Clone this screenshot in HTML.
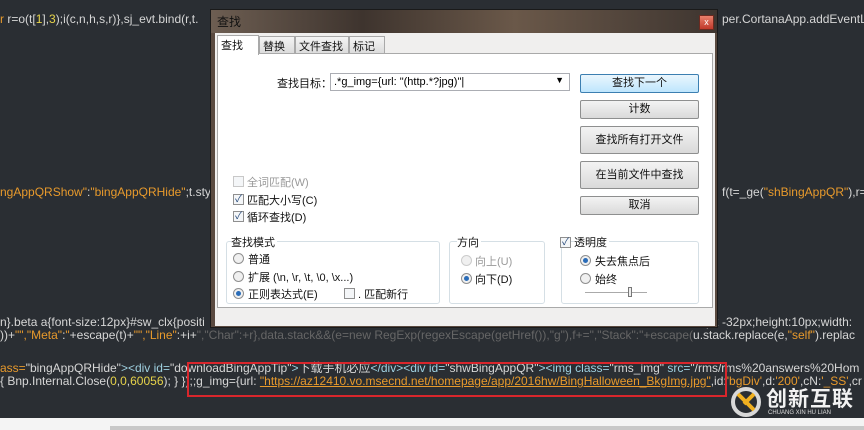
<!DOCTYPE html>
<html><head><meta charset="utf-8"><style>
*{margin:0;padding:0;box-sizing:border-box}
body{width:864px;height:430px;overflow:hidden;background:#2a2e33;font-family:"Liberation Sans","Noto Sans CJK SC",sans-serif;position:relative}
.c{position:absolute;font-size:12px;color:#d6d6d6;white-space:nowrap;line-height:13px;font-family:"Liberation Sans","Noto Sans CJK SC",sans-serif}
.o{color:#e89a2c}.y{color:#e6d34a}.b{color:#9fd0e0}.u{color:#e89a2c;text-decoration:underline}
.a{position:absolute}
.dlg{left:210px;top:9px;width:508px;height:319px;background:#5a4a40;border:1px solid #1a1a1a}
.ttl{left:0;top:0;width:506px;height:23px;background:linear-gradient(90deg,#6d5e52,#3e342e 30%,#6a5849 60%,#3e3530);color:#111;font-size:12px;padding:3px 6px}
.close{left:488px;top:5px;width:15px;height:15px;background:linear-gradient(#e8806c,#c0392b);border:1px solid #6b2a20;color:#fff;font-size:9px;text-align:center;line-height:13px}
.body{left:4px;top:23px;width:500px;height:293px;background:#f0efee}
.page{left:2px;top:20px;width:496px;height:255px;background:#fff;border:1px solid #a9a9a9}
.tab{top:3px;height:18px;background:linear-gradient(#f4f4f4,#dcdcdc);border:1px solid #a9a9a9;font-size:11px;padding:1px 3px;color:#111;white-space:nowrap;overflow:hidden}
.btn{left:365px;width:119px;background:linear-gradient(#f3f3f3,#dadada);border:1px solid #8e8f8f;border-radius:2px;font-size:11px;text-align:center;color:#111;line-height:17px}
.t{font-size:11px;color:#111;white-space:nowrap}
.cb{width:11px;height:11px;border:1px solid #8f8f8f;background:#f4f6f8;font-size:10px;line-height:9px;color:#24487a;text-align:center}
.rd{width:11px;height:11px;border:1px solid #8f8f8f;border-radius:50%;background:#f0f0f0}
.rd.on::after{content:"";position:absolute;left:2px;top:2px;width:5px;height:5px;border-radius:50%;background:#2a6cb8}
.grp{border:1px solid #d5dfe5;border-radius:3px}
</style></head><body>
<div class="c" style="left:0;top:13px"><span class="o">r</span> r=o(t[<span class="y">1</span>],<span class="y">3</span>);i(c,n,h,s,r)},sj_evt.bind(r,t.</div>
<div class="c" style="left:722px;top:13px">per.CortanaApp.addEventLis</div>
<div class="c" style="left:0;top:186px"><span class="o">ngAppQRShow"</span>:<span class="o">"bingAppQRHide"</span>;t.style.</div>
<div class="c" style="left:722px;top:186px">f(t=_ge(<span class="o">"shBingAppQR"</span>),r=</div>
<div class="c" style="left:0;top:316px">n}.beta a{font-size:12px}#sw_clx{positi</div>
<div class="c" style="left:706px;top:316px">px -32px;height:10px;width:</div>
<div class="c" style="left:0;top:329px">))+<span class="o">"","Meta"</span>:<span class="o">"</span>+escape(t)+<span class="o">"","Line"</span>:+i+<span style="color:#666">","Char":+r},data.stack&&(e=new RegExp(regexEscape(getHref()),"g"),f+=","Stack":"+escape(</span>u.stack.replace(e,<span class="o">"self"</span>).replac</div>
<div class="c" style="left:0;top:362px"><span class="o">ass=</span>"bingAppQRHide"<span class="b">&gt;&lt;div id=</span>"downloadBingAppTip"<span class="b">&gt;</span>下载手机必应<span class="b">&lt;/div&gt;&lt;div id=</span>"shwBingAppQR"<span class="b">&gt;&lt;img class=</span>"rms_img" <span class="b">src=</span>"/rms/rms%20answers%20Hom</div>
<div class="c" style="left:0;top:375px">{ Bnp.Internal.Close(<span class="y">0</span>,<span class="y">0</span>,<span class="y">60056</span>); } });;g_img={url: <span class="u">"https://az12410.vo.msecnd.net/homepage/app/2016hw/BingHalloween_BkgImg.jpg"</span>,id:<span class="o">'bgDiv'</span>,d:<span class="o">'200'</span>,cN:<span class="o">'_SS'</span>,cr</div>
<div class="a" style="left:187px;top:362px;width:540px;height:35px;border:2px solid #d9262c"></div>
<div class="a" style="left:0;top:418px;width:864px;height:12px;background:#f4f4f4"></div>
<div class="a" style="left:110px;top:426px;width:754px;height:4px;background:#c8c8c8"></div>
<svg class="a" style="left:730px;top:386px" width="32" height="32" viewBox="0 0 32 32"><circle cx="16" cy="16" r="13" fill="none" stroke="#d8d8d8" stroke-width="4"/><path d="M8 8 L24 24 M24 8 L14 18" stroke="#f0b020" stroke-width="4"/></svg>
<div class="a" style="left:766px;top:386px;color:#f2f2f2;font-size:21px;font-weight:bold;letter-spacing:1px;font-family:'Noto Sans CJK SC',sans-serif;line-height:24px">创新互联</div>
<div class="a" style="left:768px;top:410px;color:#ddd;font-size:6px;line-height:7px">CHUANG XIN HU LIAN</div>

<div class="a dlg">
<div class="a ttl">查找</div>
<div class="a close">x</div>
<div class="a body">
<div class="a page"></div>
<div class="a tab" style="left:2px;top:2px;height:20px;width:42px;background:#fff;border-bottom:none">查找</div>
<div class="a tab" style="left:44px;width:36px">替换</div>
<div class="a tab" style="left:80px;width:54px">文件查找</div>
<div class="a tab" style="left:134px;width:36px">标记</div>
<div class="a t" style="left:62px;top:42px">查找目标：</div>
<div class="a" style="left:115px;top:40px;width:240px;height:18px;border:1px solid #abadb3;background:#fff;font-size:11px;padding:2px 3px">.*g_img={url: "(http.*?jpg)"|<span style="position:absolute;right:5px;top:1px;font-size:9px">▼</span></div>
<div class="a btn" style="top:41px;height:19px;background:linear-gradient(#eaf6fd,#bee6fd);border-color:#3c7fb1">查找下一个</div>
<div class="a btn" style="top:67px;height:19px">计数</div>
<div class="a btn" style="top:93px;height:28px;line-height:26px">查找所有打开文件</div>
<div class="a btn" style="top:128px;height:28px;line-height:26px">在当前文件中查找</div>
<div class="a btn" style="top:163px;height:19px">取消</div>
<div class="a cb" style="left:18px;top:143px;border-color:#c8c8c8"></div><div class="a t" style="left:32px;top:141px;color:#999">全词匹配(W)</div>
<div class="a cb" style="left:18px;top:161px">✓</div><div class="a t" style="left:32px;top:159px">匹配大小写(C)</div>
<div class="a cb" style="left:18px;top:178px">✓</div><div class="a t" style="left:32px;top:176px">循环查找(D)</div>
<div class="a grp" style="left:11px;top:208px;width:214px;height:63px"></div>
<div class="a t" style="left:16px;top:201px;background:#fff;padding-right:2px">查找模式</div>
<div class="a rd" style="left:18px;top:220px"></div><div class="a t" style="left:33px;top:218px">普通</div>
<div class="a rd" style="left:18px;top:238px"></div><div class="a t" style="left:33px;top:236px">扩展 (\n, \r, \t, \0, \x...)</div>
<div class="a rd on" style="left:18px;top:255px"></div><div class="a t" style="left:33px;top:253px">正则表达式(E)</div>
<div class="a cb" style="left:129px;top:255px"></div><div class="a t" style="left:143px;top:253px">. 匹配新行</div>
<div class="a grp" style="left:234px;top:208px;width:96px;height:63px"></div>
<div class="a t" style="left:242px;top:201px;background:#fff;padding-right:2px">方向</div>
<div class="a rd" style="left:246px;top:222px;border-color:#ccc"></div><div class="a t" style="left:260px;top:220px;color:#999">向上(U)</div>
<div class="a rd on" style="left:246px;top:240px"></div><div class="a t" style="left:260px;top:238px">向下(D)</div>
<div class="a grp" style="left:346px;top:208px;width:138px;height:63px"></div>
<div class="a cb" style="left:345px;top:204px">✓</div><div class="a t" style="left:359px;top:201px;background:#fff;padding-right:2px">透明度</div>
<div class="a rd on" style="left:365px;top:222px"></div><div class="a t" style="left:380px;top:220px">失去焦点后</div>
<div class="a rd" style="left:365px;top:240px"></div><div class="a t" style="left:380px;top:238px">始终</div>
<div class="a" style="left:370px;top:259px;width:62px;height:1px;background:#aaa"></div>
<div class="a" style="left:413px;top:254px;width:4px;height:10px;border:1px solid #777;background:#eee"></div>
</div></div>
</body></html>
